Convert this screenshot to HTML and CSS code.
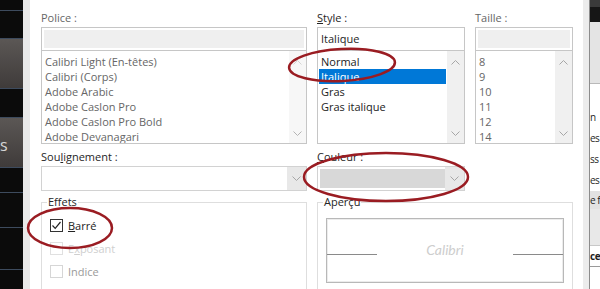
FILE: index.html
```html
<!DOCTYPE html>
<html lang="fr">

<head>
  <meta charset="UTF-8">
  <meta name="viewport" content="width=device-width, initial-scale=1.0">
  <title>Police</title>
  <link rel="stylesheet" href="styles.css">
</head>

<body>
  <div class="screen">
    <div class="taskbar">
      <div class="tb-gap h10"></div>
      <div class="tb-gap h28"></div>
      <div class="tb-btn h50"></div>
      <div class="tb-gap h29"></div>
      <div class="tb-btn h50"><span class="tb-label">s</span></div>
      <div class="tb-gap h25"></div>
      <div class="tb-gap h35"></div>
      <div class="tb-gap h42"></div>
      <div class="tb-gap rest"></div>
    </div>
    <div class="gutter"></div>

    <div class="dialog">
      <div class="top-row">
        <div class="field">
          <div class="label muted">Police :</div>
          <div class="entry"><div class="fill"></div></div>
          <div class="list">
            <ul class="items muted">
              <li>Calibri Light (En-têtes)</li>
              <li>Calibri (Corps)</li>
              <li>Adobe Arabic</li>
              <li>Adobe Caslon Pro</li>
              <li>Adobe Caslon Pro Bold</li>
              <li>Adobe Devanagari</li>
            </ul>
            <div class="scrollbar faint">
              <svg width="9" height="5" viewBox="0 0 9 5"><polyline points="0.5,4.5 4.5,0.5 8.5,4.5" /></svg>
              <svg width="9" height="5" viewBox="0 0 9 5"><polyline class="dark" points="0.5,0.5 4.5,4.5 8.5,0.5" /></svg>
            </div>
          </div>
        </div>

        <div class="field">
          <div class="label"><u>S</u>tyle :</div>
          <div class="entry text">Italique</div>
          <div class="list">
            <ul class="items">
              <li>Normal</li>
              <li class="selected">Italique</li>
              <li>Gras</li>
              <li>Gras italique</li>
            </ul>
            <div class="scrollbar">
              <svg width="9" height="5" viewBox="0 0 9 5"><polyline points="0.5,4.5 4.5,0.5 8.5,4.5" /></svg>
              <svg width="9" height="5" viewBox="0 0 9 5"><polyline points="0.5,0.5 4.5,4.5 8.5,0.5" /></svg>
            </div>
          </div>
        </div>

        <div class="field">
          <div class="label muted">Taille :</div>
          <div class="entry"><div class="fill"></div></div>
          <div class="list">
            <ul class="items muted">
              <li>8</li>
              <li>9</li>
              <li>10</li>
              <li>11</li>
              <li>12</li>
              <li>14</li>
            </ul>
            <div class="scrollbar">
              <svg width="9" height="5" viewBox="0 0 9 5"><polyline points="0.5,4.5 4.5,0.5 8.5,4.5" /></svg>
              <svg width="9" height="5" viewBox="0 0 9 5"><polyline points="0.5,0.5 4.5,4.5 8.5,0.5" /></svg>
            </div>
          </div>
        </div>
      </div>

      <div class="mid-row">
        <div class="field">
          <div class="label">Sou<u>l</u>ignement :</div>
          <div class="combo">
            <div class="value"></div>
            <div class="drop">
              <svg width="9" height="5" viewBox="0 0 9 5"><polyline points="0.5,0.5 4.5,4.5 8.5,0.5" /></svg>
            </div>
          </div>
        </div>
        <div class="field">
          <div class="label"><u>C</u>ouleur :</div>
          <div class="combo color">
            <div class="value"></div>
            <div class="drop">
              <svg width="9" height="5" viewBox="0 0 9 5"><polyline points="0.5,0.5 4.5,4.5 8.5,0.5" /></svg>
            </div>
          </div>
        </div>
      </div>

      <div class="bottom-row">
        <fieldset class="group">
          <legend>Effets</legend>
          <div class="checks">
            <label class="check">
              <span class="box on">
                <svg width="11" height="11" viewBox="0 0 11 11"><polyline points="1.5,5.5 4.2,8.3 9.5,2" /></svg>
              </span>
              <span><u>B</u>arré</span>
            </label>
            <label class="check off">
              <span class="box"></span>
              <span>E<u>x</u>posant</span>
            </label>
            <label class="check dim">
              <span class="box"></span>
              <span>Indice</span>
            </label>
          </div>
        </fieldset>
        <fieldset class="group">
          <legend>Aperçu</legend>
          <div class="preview">
            <span class="rule"></span>
            <span class="sample">Calibri</span>
            <span class="rule"></span>
          </div>
        </fieldset>
      </div>
    </div>

    <div class="side">
      <div class="side-edge"></div>
      <div class="side-line"></div>
      <div class="side-content">
        <div class="sc-top"></div>
        <div class="sc-dark"></div>
        <div class="sc-gray"></div>
        <div class="sc-row first">n</div>
        <div class="sc-row">es</div>
        <div class="sc-row">ss</div>
        <div class="sc-row">es</div>
        <div class="sc-row shaded">e f</div>
        <div class="sc-block"></div>
        <div class="sc-row strong">ce</div>
        <div class="sc-rest"></div>
      </div>
    </div>

    <!-- annotations drawn over the dialog -->
    <svg class="marks" width="600" height="289" viewBox="0 0 600 289">
      <ellipse cx="342" cy="65" rx="53" ry="16" transform="rotate(-3 342 65)" />
      <ellipse cx="70" cy="228" rx="42" ry="20" />
      <ellipse cx="386" cy="177" rx="82" ry="24" />
    </svg>
  </div>
</body>

</html>
```

FILE: styles.css
```css
* {
  box-sizing: border-box;
}

html,
body {
  margin: 0;
}

body {
  width: 600px;
  height: 289px;
  overflow: hidden;
  font-family: "Open Sans", "Noto Sans", sans-serif;
  font-size: 11px;
  color: #222;
}

.screen {
  position: relative;
  display: flex;
  width: 600px;
  height: 289px;
  overflow: hidden;
  background: #fff;
}

/* dark strip on the left */
.taskbar {
  width: 23px;
  flex: none;
  display: flex;
  flex-direction: column;
  background: #0b0b0b;
}

.tb-gap {
  border-bottom: 1px solid #3d4b5e;
}

.tb-btn {
  display: flex;
  align-items: center;
  background: linear-gradient(#5b5755, #3f3b3a);
  border-bottom: 1px solid #3d4b5e;
  overflow: hidden;
}

.tb-label {
  margin-top: 4px;
  font-size: 16px;
  line-height: 18px;
  color: #d6d6d6;
}

.h10 { height: 11px; }
.h25 { height: 25px; }
.h28 { height: 28px; }
.h29 { height: 29px; }
.h35 { height: 35px; }
.h42 { height: 42px; }
.h50 { height: 50px; }
.rest { flex: 1; border-bottom: none; }

.gutter {
  width: 7px;
  flex: none;
  background: #e9e9e9;
}

/* dialog */
.dialog {
  width: 553px;
  flex: none;
  padding: 9px 10px 0 11px;
}

.top-row {
  display: grid;
  grid-template-columns: 266px 148px 98px;
  column-gap: 10px;
}

.label {
  height: 18px;
  line-height: 18px;
  color: #262626;
  white-space: nowrap;
}

.muted {
  color: #666;
}

.entry {
  height: 24px;
  border: 1px solid #c6c6c6;
  padding: 2px;
}

.entry .fill {
  height: 100%;
  background: #efefef;
}

.entry.text {
  padding: 0 3px;
  line-height: 22px;
  color: #1e1e1e;
}

.list {
  display: flex;
  height: 93px;
  border: 1px solid #c6c6c6;
  border-top: none;
}

.items {
  flex: 1;
  list-style: none;
  margin: 0;
  padding: 3px 1px 0 1px;
  overflow: hidden;
}

.items li {
  height: 15px;
  line-height: 15px;
  padding-left: 2px;
  white-space: nowrap;
}

.items li.selected {
  background: #0078d7;
  color: #fff;
}

.scrollbar {
  width: 17px;
  flex: none;
  display: flex;
  flex-direction: column;
  justify-content: space-between;
  align-items: center;
  padding: 9px 0 7px;
  background: #f0f0f0;
}

.scrollbar svg,
.drop svg {
  fill: none;
  stroke: #a6a6a6;
  stroke-width: 1;
}

.scrollbar.faint {
  background: #f7f7f7;
}

.scrollbar.faint svg {
  stroke: #d4d4d4;
}

.scrollbar.faint svg .dark {
  stroke: #b4b4b4;
}

.mid-row {
  display: grid;
  grid-template-columns: 266px 148px;
  column-gap: 10px;
  margin-top: 4px;
}

.combo {
  display: flex;
  height: 25px;
  border: 1px solid #d2d2d2;
}

.combo .value {
  flex: 1;
}

.combo .drop {
  width: 19px;
  display: flex;
  align-items: center;
  justify-content: center;
  background: #e8e8e8;
}

.combo.color {
  padding: 2px 0 2px 2px;
}

.combo.color .value {
  background: #d8d8d8;
}

.combo.color .drop {
  margin: -2px 0;
}

/* group boxes */
.bottom-row {
  display: grid;
  grid-template-columns: 266px 256px;
  column-gap: 10px;
  margin-top: 4px;
}

.group {
  margin: 0;
  padding: 0 8px;
  height: 120px;
  border: 1px solid #dedede;
}

.group legend {
  margin-left: -3px;
  padding: 0 1px;
  line-height: 14px;
  color: #262626;
}

.checks {
  padding-top: 5px;
}

.check {
  display: flex;
  align-items: center;
  gap: 5px;
  height: 23px;
}

.box {
  width: 13px;
  height: 13px;
  display: flex;
  align-items: center;
  justify-content: center;
  border: 1px solid #ccc;
  background: #fff;
}

.box.on {
  border-color: #333;
}

.box svg {
  fill: none;
  stroke: #222;
  stroke-width: 1.2;
}

.check.off {
  color: #cfcfcf;
}

.check.off .box {
  border-color: #e0e0e0;
}

.check.dim {
  color: #9a9a9a;
}

.check.dim .box {
  border-color: #d6d6d6;
}

.preview {
  display: flex;
  align-items: center;
  height: 65px;
  margin-top: 9px;
  border: 1px solid #b8b8b8;
  box-shadow: inset 0 0 0 1px #ececec;
}

.rule {
  width: 50px;
  height: 1px;
  margin-top: 8px;
  background: #8a8a8a;
}

.sample {
  flex: 1;
  text-align: center;
  font-family: Lato, "Open Sans", sans-serif;
  font-style: italic;
  font-size: 14px;
  color: #cdcdcd;
  margin-top: -2px;
}

/* window behind, on the right */
.side {
  flex: 1;
  display: flex;
}

.side-edge {
  width: 6px;
  background: #ececec;
}

.side-line {
  width: 1px;
  background: #8c8c8c;
}

.side-content {
  flex: 1;
  display: flex;
  flex-direction: column;
  overflow: hidden;
  font-size: 10px;
  letter-spacing: -0.5px;
  color: #1e1e1e;
}

.sc-top {
  height: 7px;
  background: #3a3a3a;
}

.sc-dark {
  height: 15px;
  background: #161616;
}

.sc-gray {
  height: 62px;
  background: #e4e4e4;
  border-bottom: 1px solid #b9b9b9;
}

.sc-row {
  height: 21px;
  line-height: 21px;
  white-space: nowrap;
}

.sc-row.first {
  margin-top: 23px;
}

.sc-row.shaded {
  height: 18px;
  line-height: 18px;
  background: #e2e2e2;
}

.sc-block {
  height: 37px;
  background: #e8e8e8;
  border-bottom: 1px solid #c8c8c8;
}

.sc-row.strong {
  font-weight: 700;
  border-bottom: 1px solid #9a9a9a;
}

.sc-rest {
  flex: 1;
}

.marks {
  position: absolute;
  top: 0;
  left: 0;
  pointer-events: none;
}

.marks ellipse {
  fill: none;
  stroke: #9a1c22;
  stroke-width: 2.5;
}
```
